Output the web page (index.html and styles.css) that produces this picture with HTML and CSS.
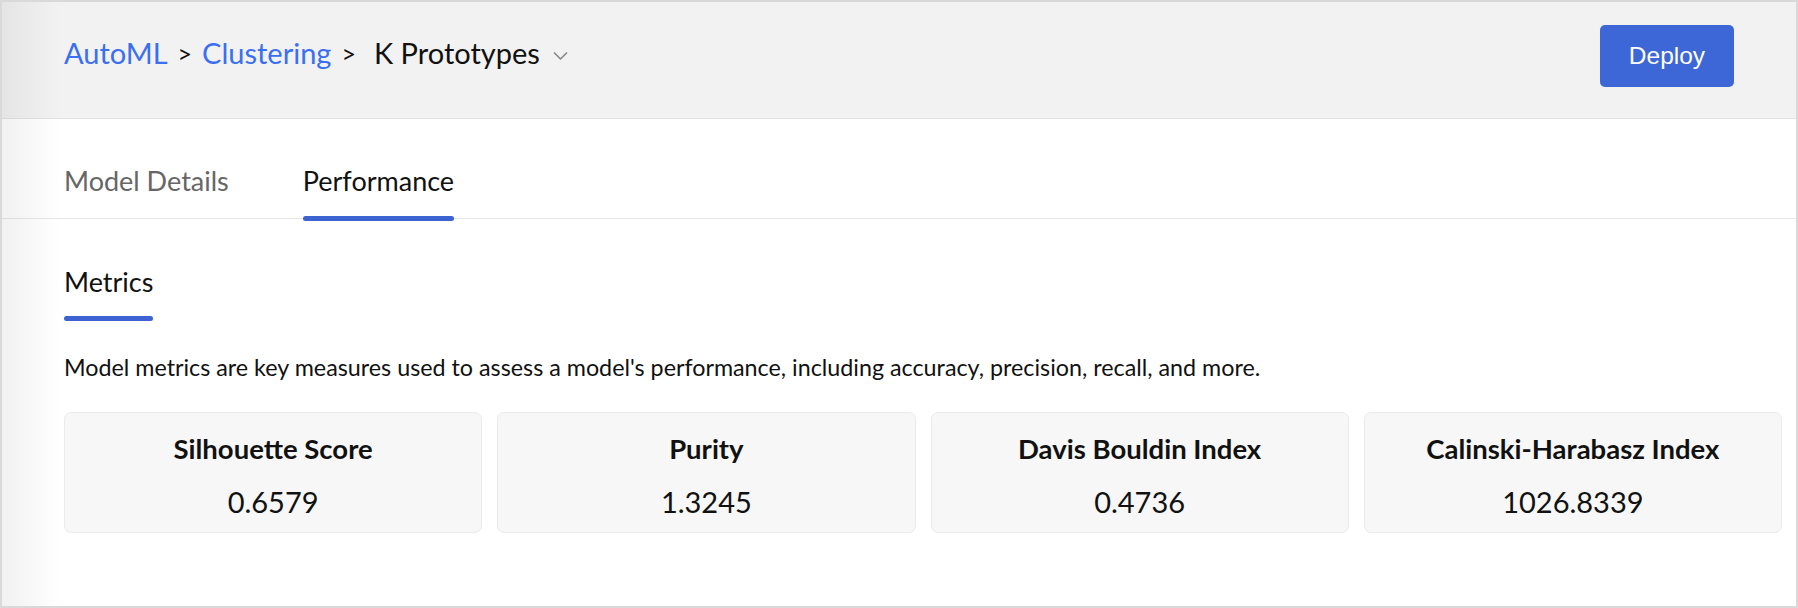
FILE: index.html
```html
<!DOCTYPE html>
<html lang="en">
<head>
<meta charset="utf-8">
<title>K Prototypes - Performance</title>
<link rel="stylesheet" href="styles.css">
</head>
<body>
<div class="page">
  <header class="topbar">
    <nav class="crumbs">
      <a class="crumb-link" href="#">AutoML</a>
      <span class="sep">&gt;</span>
      <a class="crumb-link" href="#">Clustering</a>
      <span class="sep">&gt;</span>
      <span class="crumb-current">K Prototypes</span>
      <svg class="chev" width="17" height="11" viewBox="0 0 17 11"><path d="M2.5 3 L8.5 9 L14.5 3" fill="none" stroke="#8a8a8a" stroke-width="1.7" stroke-linecap="round" stroke-linejoin="round"/></svg>
    </nav>
    <button class="deploy">Deploy</button>
  </header>
  <div class="tabs">
    <div class="tab">Model Details</div>
    <div class="tab active">Performance</div>
  </div>
  <main class="content">
    <div class="section-title"><span class="metrics">Metrics</span></div>
    <p class="desc">Model metrics are key measures used to assess a model's performance, including accuracy, precision, recall, and more.</p>
    <div class="cards">
      <div class="card"><div class="card-title">Silhouette Score</div><div class="card-value">0.6579</div></div>
      <div class="card"><div class="card-title">Purity</div><div class="card-value">1.3245</div></div>
      <div class="card"><div class="card-title">Davis Bouldin Index</div><div class="card-value">0.4736</div></div>
      <div class="card"><div class="card-title">Calinski-Harabasz Index</div><div class="card-value">1026.8339</div></div>
    </div>
  </main>
</div>
</body>
</html>
```

FILE: styles.css
```css
* { box-sizing: border-box; }
html, body { margin: 0; padding: 0; background: #fff; }
body { font-family: Lato, "Noto Sans", sans-serif; color: #111; }

.page {
  position: relative;
  width: 1798px;
  height: 608px;
  border: 2px solid #d9d9d9;
  overflow: hidden;
  background: #fff;
}
.page::before {
  content: "";
  position: absolute;
  left: 0; top: 0; bottom: 0;
  width: 58px;
  background: linear-gradient(to right, rgba(0,0,0,0.055), rgba(0,0,0,0));
  pointer-events: none;
}

.topbar {
  height: 117px;
  background: #f2f2f2;
  border-bottom: 1px solid #e3e3e3;
  display: flex;
  align-items: center;
  justify-content: space-between;
  padding: 0 62px 8px 62px;
}
.crumbs { display: flex; align-items: center; font-size: 29px; margin-bottom: 7px; }
.crumb-link { color: #3a6ff3; text-decoration: none; }
.sep { color: #111; margin: 0 10px; font-size: 25px; }
.crumb-current { color: #111; margin-left: 8px; }
.chev { margin-left: 12px; margin-top: 5px; }

.deploy {
  width: 134px;
  height: 62px;
  background: #3d67d6;
  color: #fff;
  border: none;
  border-radius: 5px;
  font-family: "Liberation Sans", Arial, sans-serif;
  font-size: 24.5px;
}

.tabs {
  display: flex;
  gap: 74px;
  padding: 0 62px;
  border-bottom: 1px solid #e6e6e6;
  height: 100px;
  align-items: flex-end;
}
.tab {
  position: relative;
  font-size: 27px;
  line-height: 30px;
  padding-bottom: 22px;
  color: #666;
}
.tab.active { color: #111; }
.tab.active::after {
  content: "";
  position: absolute;
  left: 0; right: 0;
  bottom: -3px;
  height: 5px;
  border-radius: 3px;
  background: #3d63d3;
}

.content { padding: 48px 14px 0 62px; }
.section-title { line-height: 30px; }
.metrics {
  display: inline-block;
  position: relative;
  font-size: 27px;
  line-height: 30px;
  padding-bottom: 24px;
}
.metrics::after {
  content: "";
  position: absolute;
  left: 0; right: 0; bottom: 0;
  height: 5px;
  border-radius: 3px;
  background: #3d63d3;
}
.desc {
  margin: 33px 0 0 0;
  font-size: 23.3px;
  line-height: 26px;
}
.cards {
  margin-top: 32px;
  display: grid;
  grid-template-columns: repeat(4, 1fr);
  gap: 15px;
}
.card {
  height: 121px;
  background: #f7f7f7;
  border: 1px solid #ebebeb;
  border-radius: 7px;
  text-align: center;
  padding-top: 21px;
}
.card-title { font-size: 27.5px; font-weight: 700; line-height: 29px; }
.card-value { font-size: 29px; line-height: 31px; margin-top: 23px; }
```
